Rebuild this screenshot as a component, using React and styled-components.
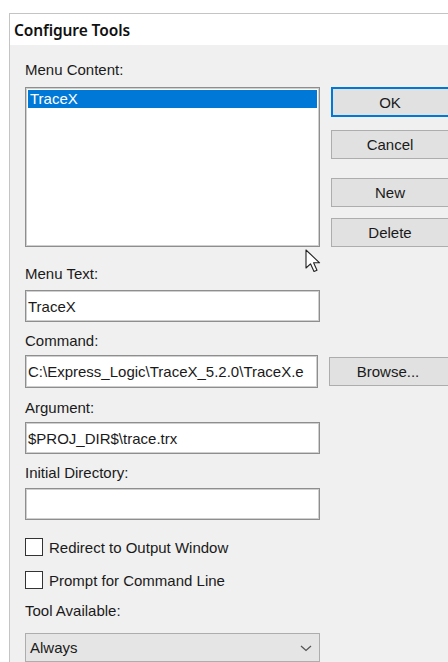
import React from "react";
import styled, { createGlobalStyle } from "styled-components";

const GlobalStyle = createGlobalStyle`
  html, body {
    margin: 0;
    padding: 0;
    background: #ffffff;
    overflow: hidden;
  }
  body {
    font-family: "Liberation Sans", Arial, sans-serif;
    color: #1a1a1a;
  }
`;

const Window = styled.div`
  margin: 13px 0 0 9px;
  width: 439px;
  height: 649px;
  border-top: 1px solid #c4c4c4;
  border-left: 1px solid #c4c4c4;
  display: flex;
  flex-direction: column;
  overflow: hidden;
`;

const TitleBar = styled.div`
  height: 31px;
  flex: none;
  background: #ffffff;
  display: flex;
  align-items: center;
  padding-left: 4px;
  font-family: "Noto Sans", "Open Sans", sans-serif;
  font-weight: 600;
  font-size: 15.5px;
  letter-spacing: -0.1px;
  color: #111;
`;

const Body = styled.div`
  flex: 1;
  background: #f0f0f0;
  padding: 16px 0 0 15px;
  display: flex;
  flex-direction: column;
  font-size: 15px;
`;

const Row = styled.div`
  display: flex;
  gap: 11px;
  align-items: ${(p) => p.$align || "flex-start"};
  margin-top: ${(p) => p.$top || 0}px;
`;

const Column = styled.div`
  width: 295px;
  flex: none;
  display: flex;
  flex-direction: column;
`;

const ButtonStack = styled.div`
  display: flex;
  flex-direction: column;
  padding-top: 26px;
`;

const Label = styled.div`
  height: 18px;
  line-height: 18px;
  margin-top: ${(p) => p.$top || 0}px;
  margin-bottom: ${(p) => p.$bottom || 5}px;
  white-space: nowrap;
`;

const ListBox = styled.div`
  height: 160px;
  box-sizing: border-box;
  background: #ffffff;
  border: 1px solid #8e8e8e;
  box-shadow: inset 0 0 0 1px #cfcfcf;
  padding: 2px;
`;

const ListItem = styled.div`
  height: 18px;
  line-height: 18px;
  padding-left: 2px;
  background: ${(p) => (p.$selected ? "#0078d7" : "transparent")};
  color: ${(p) => (p.$selected ? "#ffffff" : "#1a1a1a")};
`;

const TextBox = styled.div`
  width: 295px;
  height: ${(p) => p.$height || 32}px;
  box-sizing: border-box;
  background: #ffffff;
  border: 1px solid #8e8e8e;
  box-shadow: inset 0 0 0 1px #cfcfcf;
  padding: 0 2px 0 2px;
  display: flex;
  align-items: center;
  white-space: nowrap;
  overflow: hidden;
`;

const Button = styled.div`
  width: 120px;
  height: ${(p) => (p.$default ? 30 : 29)}px;
  box-sizing: border-box;
  flex: none;
  margin-top: ${(p) => p.$top || 0}px;
  background: #e1e1e1;
  border: ${(p) => (p.$default ? "2px solid #0078d7" : "1px solid #adadad")};
  display: flex;
  align-items: center;
  justify-content: center;
  padding-right: 2px;
`;

const CheckRow = styled.div`
  display: flex;
  align-items: center;
  gap: 6px;
  height: 18px;
  margin-top: ${(p) => p.$top || 0}px;
`;

const CheckBox = styled.span`
  width: 18px;
  height: 18px;
  box-sizing: border-box;
  background: #ffffff;
  border: 1px solid #333;
  flex: none;
`;

const Select = styled.div`
  width: 295px;
  height: 29px;
  box-sizing: border-box;
  background: #e5e5e5;
  border: 1px solid #adadad;
  display: flex;
  align-items: center;
  justify-content: space-between;
  padding: 0 6px 0 4px;
`;

const Pointer = styled.svg`
  position: absolute;
  left: 305px;
  top: 249px;
`;

const Chevron = () => (
  <svg width="14" height="10" viewBox="0 0 14 10">
    <path d="M2 3 L7 7.5 L12 3" fill="none" stroke="#555" strokeWidth="1.3" />
  </svg>
);

const App = () => {
  return (
    <>
      <GlobalStyle />
      <Window>
        <TitleBar>Configure Tools</TitleBar>
        <Body>
          <Row>
            <Column>
              <Label $bottom={8}>Menu Content:</Label>
              <ListBox>
                <ListItem $selected>TraceX</ListItem>
              </ListBox>
            </Column>
            <ButtonStack>
              <Button $default>OK</Button>
              <Button $top={13}>Cancel</Button>
              <Button $top={19}>New</Button>
              <Button $top={11}>Delete</Button>
            </ButtonStack>
          </Row>

          <Label $top={18} $bottom={7}>Menu Text:</Label>
          <TextBox>TraceX</TextBox>

          <Label $top={10}>Command:</Label>
          <Row $align="center">
            <TextBox $height={33}>C:\Express_Logic\TraceX_5.2.0\TraceX.e</TextBox>
            <Button>Browse...</Button>
          </Row>

          <Label $top={11}>Argument:</Label>
          <TextBox>$PROJ_DIR$\trace.trx</TextBox>

          <Label $top={10} $bottom={6}>Initial Directory:</Label>
          <TextBox />

          <CheckRow $top={18}>
            <CheckBox />
            Redirect to Output Window
          </CheckRow>
          <CheckRow $top={15}>
            <CheckBox />
            Prompt for Command Line
          </CheckRow>

          <Label $top={13} $bottom={13}>Tool Available:</Label>
          <Select>
            Always
            <Chevron />
          </Select>
        </Body>
      </Window>
      <Pointer width="18" height="26" viewBox="0 0 18 26">
        <path
          d="M1 1 L1 19 L5.5 14.8 L9 22.5 L12 21.2 L8.6 13.8 L14.6 13.8 Z"
          fill="#ffffff"
          stroke="#222"
          strokeWidth="1.1"
          strokeLinejoin="round"
        />
      </Pointer>
    </>
  );
};

export default App;
